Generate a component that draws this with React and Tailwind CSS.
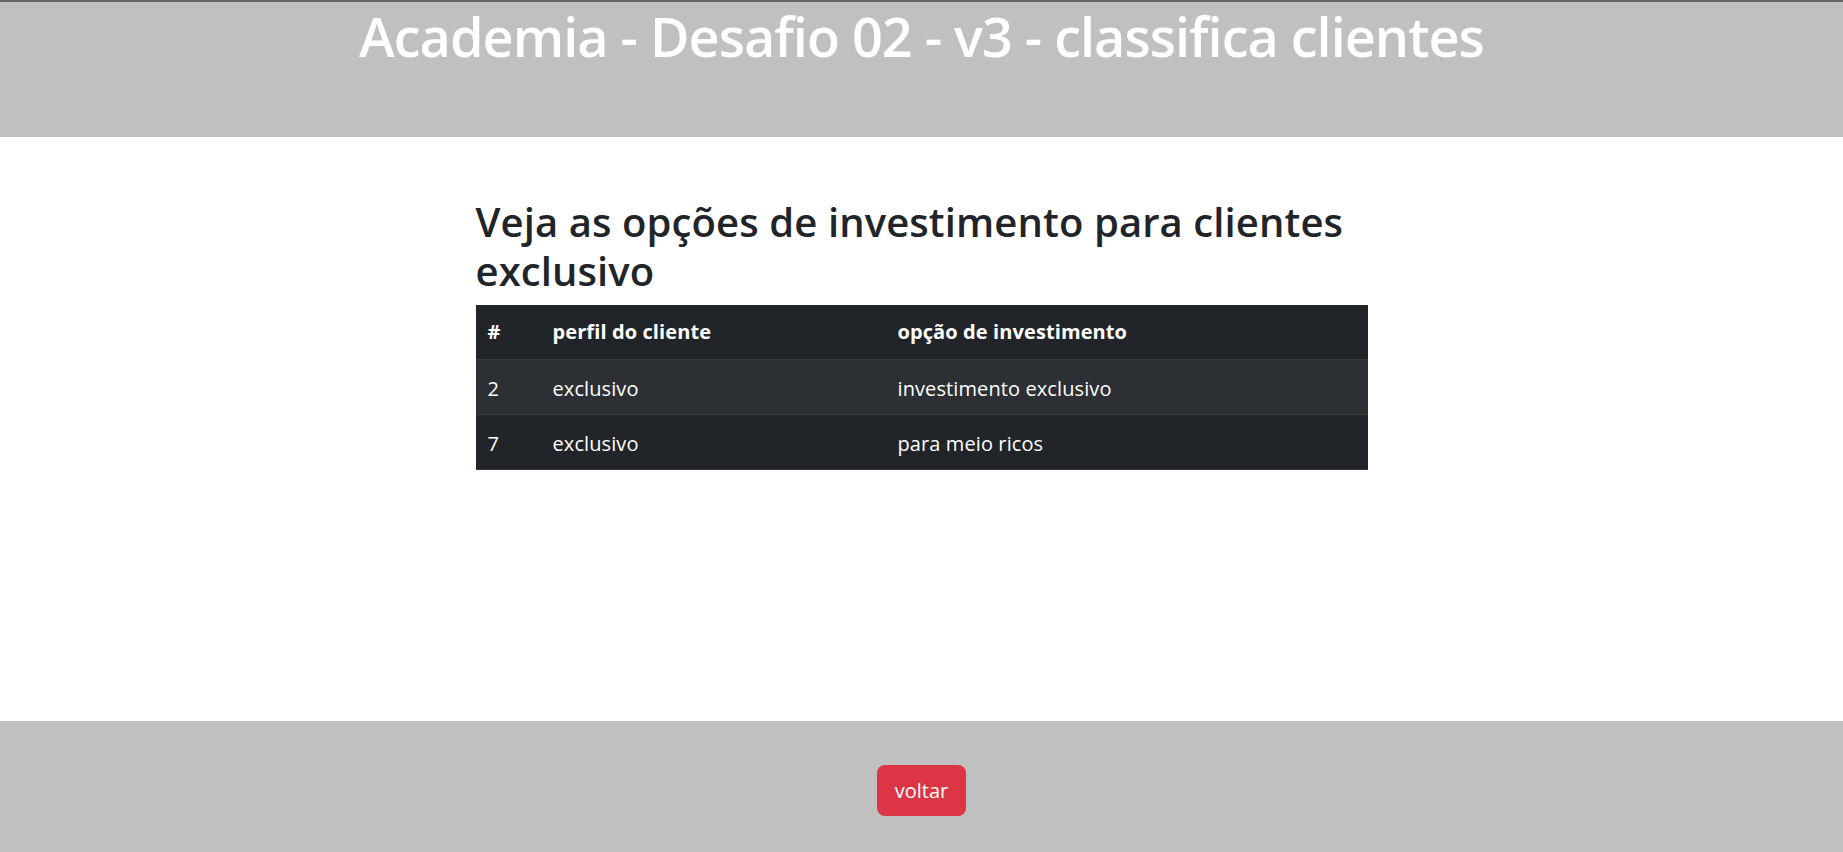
import React from "react";

const rows = [
  { id: 2, perfil: "exclusivo", opcao: "investimento exclusivo" },
  { id: 7, perfil: "exclusivo", opcao: "para meio ricos" },
];

export default function App() {
  return (
    <div className="min-h-screen flex flex-col bg-white font-['Open_Sans',sans-serif]">
      <header className="h-[137px] bg-[#c0c0c0] border-t-2 border-[#666666] pt-[2px]">
        <h1 className="text-center text-white text-[54px] leading-[1.2] tracking-[-1px] font-semibold">
          Academia - Desafio 02 - v3 - classifica clientes
        </h1>
      </header>

      <main className="flex-1">
        <div className="w-[892px] mx-auto pt-[60px]">
          <h2 className="text-[#212529] text-[40px] leading-[49px] font-semibold tracking-[0.1px] mb-[10px]">
            Veja as opções de investimento para clientes exclusivo
          </h2>
          <table className="w-full bg-[#212529] text-white text-[20px] leading-[30px] tracking-[0.1px] text-left border-collapse">
            <thead>
              <tr className="border-b border-[#373b3e]">
                <th className="w-[65px] p-3 font-bold">#</th>
                <th className="w-[345px] p-3 font-bold">perfil do cliente</th>
                <th className="p-3 font-bold">opção de investimento</th>
              </tr>
            </thead>
            <tbody>
              {rows.map((r, i) => (
                <tr key={r.id} className={"border-b border-[#373b3e] " + (i % 2 === 0 ? "bg-[#2c3034]" : "bg-[#212529]")}>
                  <td className="px-3 pt-[14px] pb-[10px]">{r.id}</td>
                  <td className="px-3 pt-[14px] pb-[10px]">{r.perfil}</td>
                  <td className="px-3 pt-[14px] pb-[10px]">{r.opcao}</td>
                </tr>
              ))}
            </tbody>
          </table>
        </div>
      </main>

      <footer className="h-[131px] bg-[#c0c0c0] flex justify-center pt-[44px]">
        <button className="h-[51px] px-[18px] rounded-lg bg-[#dc3545] text-white text-[20px]">
          voltar
        </button>
      </footer>
    </div>
  );
}
